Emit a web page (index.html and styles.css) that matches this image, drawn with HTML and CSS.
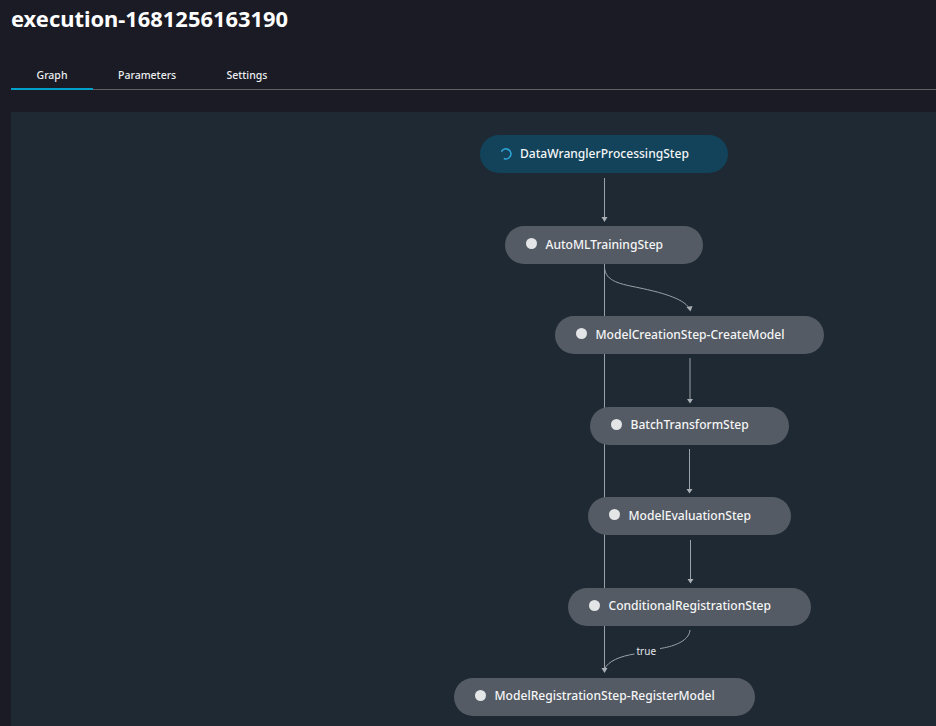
FILE: index.html
```html
<!DOCTYPE html>
<html lang="en">
<head>
<meta charset="utf-8">
<title>execution-1681256163190</title>
<link rel="stylesheet" href="styles.css">
</head>
<body>
<main class="page">
  <h1 class="title">execution-1681256163190</h1>
  <nav class="tabs">
    <a class="tab tab-active">Graph</a>
    <a class="tab tab-params">Parameters</a>
    <a class="tab tab-settings">Settings</a>
  </nav>
  <section class="canvas">
    <svg class="edges" width="925" height="614" viewBox="0 0 925 614" fill="none">
      <g stroke="#9aa1a8" stroke-width="1">
        <path d="M593.500 66 V106"/>
        <path d="M593.500 152 V556"/>
        <path d="M593.500 156 C595 170 610 172 629 176 S 672 186 678 196"/>
        <path d="M679 246 V288"/>
        <path d="M678.500 337 V378"/>
        <path d="M679.500 428 V468"/>
        <path d="M679 518 C678 530 660 535 649 536.500"/>
        <path d="M623.500 542 C610 544 597 549 593.500 557"/>
      </g>
      <g fill="#aab0b5">
        <path d="M590.500 105 H596.500 L593.500 110 Z"/>
        <path d="M675.500 195 L681.500 194 L679.500 199.500 Z"/>
        <path d="M676 287 H682 L679 291.500 Z"/>
        <path d="M675.500 377 H681.500 L678.500 381.500 Z"/>
        <path d="M676.500 467 H682.500 L679.500 471.500 Z"/>
        <path d="M590.500 556 H596.500 L593.500 561 Z"/>
      </g>
    </svg>
    <span class="edge-label">true</span>

    <div class="node node-running n1"><svg class="spinner" width="12" height="12" viewBox="0 0 12 12" fill="none"><path d="M2 1.500 A5 5 0 1 1 2 9.500" stroke="#2ea6dc" stroke-width="1.600" stroke-linecap="round" transform="rotate(-20 6 6)"/></svg><span>DataWranglerProcessingStep</span></div>
    <div class="node n2"><i class="dot"></i><span>AutoMLTrainingStep</span></div>
    <div class="node n3"><i class="dot"></i><span>ModelCreationStep-CreateModel</span></div>
    <div class="node n4"><i class="dot"></i><span>BatchTransformStep</span></div>
    <div class="node n5"><i class="dot"></i><span>ModelEvaluationStep</span></div>
    <div class="node n6"><i class="dot"></i><span>ConditionalRegistrationStep</span></div>
    <div class="node n7"><i class="dot"></i><span>ModelRegistrationStep-RegisterModel</span></div>
  </section>
</main>
</body>
</html>
```
FILE: styles.css
```css
* { box-sizing: border-box; }
html, body { margin: 0; height: 100%; overflow: hidden; }
body { background: #1a1b24; color: #f4f5f6; font-family: "Noto Sans", "Open Sans", sans-serif; }
.page { height: 726px; padding: 5px 0 0 11px; display: flex; flex-direction: column; }
.title { margin: 0; height: 30px; font-size: 21.880px; line-height: 28px; font-weight: 700; color: #fff; }
.tabs { margin-top: 33px; height: 22px; display: flex; border-bottom: 1px solid #5f6164; }
.tab { height: 22px; font-size: 10.500px; line-height: 14px; color: #eceef0; padding-left: 25.500px; font-weight: 500; }
.tab-active { width: 82px; border-bottom: 2px solid #00a1c9; }
.tab-params { width: 108px; padding-left: 25px; }
.tab-settings { width: 100px; }
.canvas { position: relative; margin-top: 22px; flex: 1; background: #1f2933; overflow: hidden; }
.edges { position: absolute; left: 0; top: 0; }
.edge-label { position: absolute; left: 625.500px; top: 532px; font-size: 10px; line-height: 14px; color: #e4e7e9; }
.node { position: absolute; height: 38px; border-radius: 19px; background: #545b64; display: flex; align-items: center; padding-left: 21px; font-size: 12.080px; font-weight: 500; color: #f4f5f6; white-space: nowrap; }
.node span { margin-left: 8.500px; margin-top: -2px; }
.dot { width: 11px; height: 11px; border-radius: 50%; background: #e4e5e7; margin-top: -3px; }
.node-running { background: #12435a; }
.node-running span { margin-left: 7px; }
.spinner { margin-top: -1px; }
.n1 { left: 469px; top: 23px; width: 248px; }
.n2 { left: 494px; top: 114px; width: 198px; }
.n3 { left: 544px; top: 204px; width: 269px; }
.n4 { left: 579px; top: 294.500px; width: 199px; }
.n5 { left: 577px; top: 385px; width: 203px; }
.n6 { left: 557px; top: 475.500px; width: 243px; }
.n7 { left: 443px; top: 565.500px; width: 301px; }
```
